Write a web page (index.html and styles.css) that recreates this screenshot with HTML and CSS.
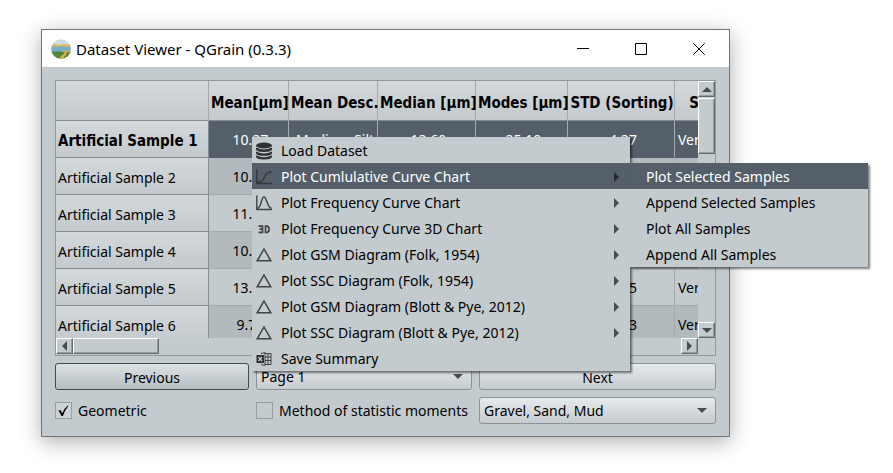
FILE: index.html
```
<!DOCTYPE html>
<html lang="en">
<head>
<meta charset="utf-8">
<title>Dataset Viewer - QGrain (0.3.3)</title>
<link rel="stylesheet" href="styles.css">
</head>
<body>
<svg class="defs" width="0" height="0" aria-hidden="true">
  <symbol id="triangle" viewBox="0 0 18 18"><path d="M9 3 L15.8 14.8 H2.2 Z" fill="none" stroke="#3f4345" stroke-width="1.5"/></symbol>
</svg>
<main class="window">
  <header class="titlebar">
    <svg class="logo" viewBox="0 0 20 20" aria-hidden="true">
      <clipPath id="disc"><circle cx="10" cy="10" r="9.8"/></clipPath>
      <g clip-path="url(#disc)">
        <rect width="20" height="20" fill="#ccdde2"/>
        <path d="M0 5.5 L5 5 L8 6 L13 5 L20 5.5 V8 H0Z" fill="#e2b75f"/>
        <rect y="7.5" width="20" height="7" fill="#79aec7"/>
        <path d="M0 13 Q6 11.500 12 13 L20 12 V20 H0Z" fill="#4b8a38"/>
        <path d="M20 11.5 L11 12.5 Q16 14 11 16 L8 20 H12 Q13 17 16 15 L14.500 13.500 L20 13Z" fill="#e0ae4e"/>
      </g>
    </svg>
    <h1 class="title">Dataset Viewer - QGrain (0.3.3)</h1>
    <button class="caption" aria-label="Minimize"><svg viewBox="0 0 12 12"><path d="M0 5.5H12" /></svg></button>
    <button class="caption" aria-label="Maximize"><svg viewBox="0 0 12 12"><path d="M.5 .5H11.500V11.500H.5Z"/></svg></button>
    <button class="caption" aria-label="Close"><svg viewBox="0 0 12 12"><path d="M.3 .3L11.700 11.700M11.700 .3L.3 11.700"/></svg></button>
  </header>
  <div class="content">
    <section class="frame">
      <div class="viewport">
        <table class="data">
          <colgroup><col class="c-name"><col class="c-mean"><col class="c-desc"><col class="c-median"><col class="c-modes"><col class="c-std"><col class="c-last"></colgroup>
          <thead>
            <tr><td class="corner"></td><th>Mean[μm]</th><th>Mean Desc.</th><th>Median [μm]</th><th>Modes [μm]</th><th>STD (Sorting)</th><th>STD Desc.</th></tr>
          </thead>
          <tbody>
            <tr class="selected"><th>Artificial Sample 1</th><td>10.27</td><td>Medium Silt</td><td>12.60</td><td>25.10</td><td>4.27</td><td>Very</td></tr>
            <tr><th>Artificial Sample 2</th><td>10.27</td><td></td><td></td><td></td><td></td><td>Very</td></tr>
            <tr><th>Artificial Sample 3</th><td>11.27</td><td></td><td></td><td></td><td></td><td>Very</td></tr>
            <tr><th>Artificial Sample 4</th><td>10.27</td><td></td><td></td><td></td><td></td><td>Very</td></tr>
            <tr><th>Artificial Sample 5</th><td>13.27</td><td></td><td></td><td></td><td>4.25</td><td>Very</td></tr>
            <tr><th>Artificial Sample 6</th><td>9.77</td><td></td><td></td><td></td><td>4.23</td><td>Very</td></tr>
          </tbody>
        </table>
      </div>
      <div class="vbar">
        <button class="step" aria-label="Scroll up"><i class="arrow up"></i></button>
        <div class="thumb"></div>
        <button class="step end" aria-label="Scroll down"><i class="arrow down"></i></button>
      </div>
      <div class="hbar">
        <button class="step" aria-label="Scroll left"><i class="arrow left"></i></button>
        <div class="thumb"></div>
        <button class="step end" aria-label="Scroll right"><i class="arrow right"></i></button>
      </div>
    </section>
    <div class="controls">
      <button class="push focused">Previous</button>
      <div class="combo"><select aria-label="Page"><option>Page 1</option></select><i class="arrow down"></i></div>
      <button class="push">Next</button>
      <label class="check"><input type="checkbox" checked><svg class="tick" viewBox="0 0 17 17" aria-hidden="true"><path d="M3.500 8.500L5.500 8L7.300 11.200Q9.500 6 13 3.200L13.300 4Q10 8 8 14H6.500Z"/></svg>Geometric</label>
      <label class="check"><input type="checkbox">Method of statistic moments</label>
      <div class="combo"><select aria-label="Classification"><option>Gravel, Sand, Mud</option></select><i class="arrow down"></i></div>
    </div>
  </div>
  <nav class="menu main-menu" aria-label="Dataset actions">
    <button class="item"><svg class="icon" viewBox="0 0 18 18"><g fill="#2f3234"><ellipse cx="9" cy="3.500" rx="8" ry="3"/><path d="M1 5.500Q9 9.500 17 5.500V7.500Q16 10 9 10T1 7.500ZM1 9.500Q9 13.500 17 9.500V11.200Q16 13.800 9 13.800T1 11.200ZM1 13.300Q9 17 17 13.300V15Q16 17.500 9 17.500T1 15Z"/></g></svg>Load Dataset</button>
    <button class="item active"><svg class="icon" viewBox="0 0 18 18"><path d="M1.800 1.500V15.500H17M2.500 14.200C8 14.200 8.500 11 10 8S13 3.800 16.500 3.800" fill="none" stroke="#33383c" stroke-width="1.400"/></svg>Plot Cumlulative Curve Chart<i class="arrow right"></i></button>
    <button class="item"><svg class="icon" viewBox="0 0 18 18"><path d="M1.800 1.500V15.500H17M2.500 14.200C6.500 14 6 3 9 3S12 14 16.500 14.200" fill="none" stroke="#3f4345" stroke-width="1.400"/></svg>Plot Frequency Curve Chart<i class="arrow right"></i></button>
    <button class="item"><svg class="icon" viewBox="0 0 18 18"><path d="M3.500 6.200H7.500V12.300H3.500M4.500 9.200H7.500M10.500 6.200H12.500L14 7.700V10.800L12.500 12.300H10.500Z" fill="none" stroke="#3f4345" stroke-width="1.700"/></svg>Plot Frequency Curve 3D Chart<i class="arrow right"></i></button>
    <button class="item"><svg class="icon"><use href="#triangle"/></svg>Plot GSM Diagram (Folk, 1954)<i class="arrow right"></i></button>
    <button class="item"><svg class="icon"><use href="#triangle"/></svg>Plot SSC Diagram (Folk, 1954)<i class="arrow right"></i></button>
    <button class="item"><svg class="icon"><use href="#triangle"/></svg>Plot GSM Diagram (Blott &amp; Pye, 2012)<i class="arrow right"></i></button>
    <button class="item"><svg class="icon"><use href="#triangle"/></svg>Plot SSC Diagram (Blott &amp; Pye, 2012)<i class="arrow right"></i></button>
    <button class="item"><svg class="icon" viewBox="0 0 18 18"><path d="M6 3.500L10 2.500V15.500L6 14.500M10 3.500H16V14.500H10M10 7H16M10 10.500H16M13 3.500V14.500" fill="none" stroke="#3f4345"/><rect x="1.500" y="5" width="7.500" height="8" fill="#303335"/><path d="M3.500 7L7 11M7 7L3.500 11" stroke="#c4cbce" stroke-width="1.200"/></svg>Save Summary</button>
  </nav>
  <nav class="menu sub-menu" aria-label="Cumulative curve chart actions">
    <button class="item active">Plot Selected Samples</button>
    <button class="item">Append Selected Samples</button>
    <button class="item">Plot All Samples</button>
    <button class="item">Append All Samples</button>
  </nav>
</main>
</body>
</html>
```
FILE: styles.css
```
* { box-sizing: border-box; }
body {
  margin: 0;
  padding: 29px 163px 36px 41px;
  background: #fff;
  color: #000;
  font: 14px/20px "Noto Sans", sans-serif;
}
button, select { font: inherit; color: inherit; margin: 0; }
.defs { position: absolute; }
.window {
  position: relative;
  border: 1px solid #70757a;
  background: #c4cbce;
  box-shadow: 0 5px 20px rgba(0, 0, 0, .32);
}
.titlebar {
  display: flex;
  align-items: center;
  height: 37px;
  padding: 0 1px 0 9px;
  background: #fff;
}
.logo { width: 20px; height: 20px; }
.title {
  flex: 1;
  margin: 0 0 0 5px;
  font: 15px/20px "Noto Sans", sans-serif;
  white-space: nowrap;
}
.caption {
  display: flex;
  align-items: center;
  justify-content: center;
  width: 58px;
  height: 36px;
  padding: 0;
  border: 0;
  background: none;
}
.caption svg { width: 12px; height: 12px; fill: none; stroke: #000; }
.content { padding: 13px 13px 12px; }
.frame {
  display: grid;
  grid-template-columns: minmax(0, 1fr) 17px;
  border: 1px solid #92999c;
}
.viewport { height: 257px; overflow: hidden; }
.data {
  width: 723px;
  table-layout: fixed;
  border-collapse: separate;
  border-spacing: 0;
}
.c-name { width: 153px; }
.c-mean { width: 80px; }
.c-desc { width: 89px; }
.c-median { width: 98px; }
.c-modes { width: 92px; }
.c-std { width: 107px; }
.c-last { width: 104px; }
.data tr { height: 37px; }
.data thead tr { height: 40px; }
.data th, .data td {
  padding: 4px 0 0 2px;
  border-right: 1px solid #a4abae;
  border-bottom: 1px solid #a4abae;
  text-align: center;
  white-space: nowrap;
}
.data th, .data .corner {
  background: linear-gradient(#d3d8db, #c3c9cc);
  border-bottom-color: #868d90;
}
.data thead th, .data tbody .selected th {
  font: bold 15px/20px "DejaVu Sans Condensed", "DejaVu Sans", sans-serif;
  font-stretch: condensed;
}
.data tbody th {
  border-right-color: #868d90;
  font-weight: normal;
  text-align: left;
}
.data tbody td { padding: 2px 0 0 4px; }
.data tbody td:last-child { padding-left: 3px; text-align: left; }
.data tbody tr:nth-child(even) td { background: #b2babd; }
.data tbody .selected td { background: #555f69; color: #fff; border-bottom-color: #555f69; }
.arrow { display: block; width: 0; height: 0; border: 0 solid transparent; }
.up { border-width: 0 5px 5px; border-bottom-color: #464c4f; }
.down { border-width: 5px 5px 0; border-top-color: #464c4f; }
.left { border-width: 5px 5px 5px 0; border-right-color: #464c4f; }
.right { border-width: 5px 0 5px 5px; border-left-color: #464c4f; }
.step, .thumb {
  border: 1px solid;
  border-color: #fff #666c6f #666c6f #fff;
  background: #c4cbce;
  box-shadow: inset -1px -1px #969da0;
}
.step {
  display: flex;
  align-items: center;
  justify-content: center;
  flex: none;
  width: 17px;
  height: 16px;
  padding: 0;
}
.vbar { display: flex; flex-direction: column; }
.vbar .thumb { height: 56px; margin-top: 1px; }
.vbar .end { margin: auto 0 0; }
.hbar { display: flex; height: 17px; }
.hbar .thumb { width: 86px; height: 16px; }
.hbar .end { margin: 0 0 0 auto; }
.controls {
  display: grid;
  grid-template-columns: 194fr 216fr 237fr;
  gap: 7px;
  padding-top: 7px;
}
.push, .combo select {
  display: block;
  width: 100%;
  height: 27px;
  padding: 0;
  border: 1px solid #8d9497;
  border-radius: 3px;
  background: linear-gradient(#e5eaed, #c5cbce);
}
.push { padding-top: 2px; }
.push.focused { border-color: #424a4e; background: linear-gradient(#dce1e4, #b7bec1); }
.combo { position: relative; }
.combo select { appearance: none; padding: 1px 24px 0 4px; }
.combo .arrow { position: absolute; top: 11px; right: 9px; pointer-events: none; }
.check { display: flex; align-items: center; gap: 6px; position: relative; white-space: nowrap; }
.check input {
  appearance: none;
  flex: none;
  width: 17px;
  height: 17px;
  margin: 0;
  border: 1px solid #979ea1;
  background: #c4cbce;
}
.check input:checked { background: #ccd2d5; }
.tick { position: absolute; left: 0; width: 17px; height: 17px; }
.menu {
  position: absolute;
  background: #c4cbce;
  box-shadow: 2px 2px 2px rgba(0, 0, 0, .5);
}
.main-menu { left: 210px; top: 107px; width: 378px; }
.sub-menu { left: 588px; top: 133px; width: 238px; }
.item {
  display: flex;
  align-items: center;
  width: 100%;
  height: 26px;
  padding: 1px 11px 0 3px;
  border: 0;
  background: none;
  white-space: nowrap;
}
.icon { width: 18px; height: 18px; margin-right: 8px; }
.item .arrow { margin-left: auto; }
.item.active { background: #555f69; color: #fff; }
.item.active .arrow { border-left-color: #23282b; }
.sub-menu .item { padding-left: 16px; }
```
